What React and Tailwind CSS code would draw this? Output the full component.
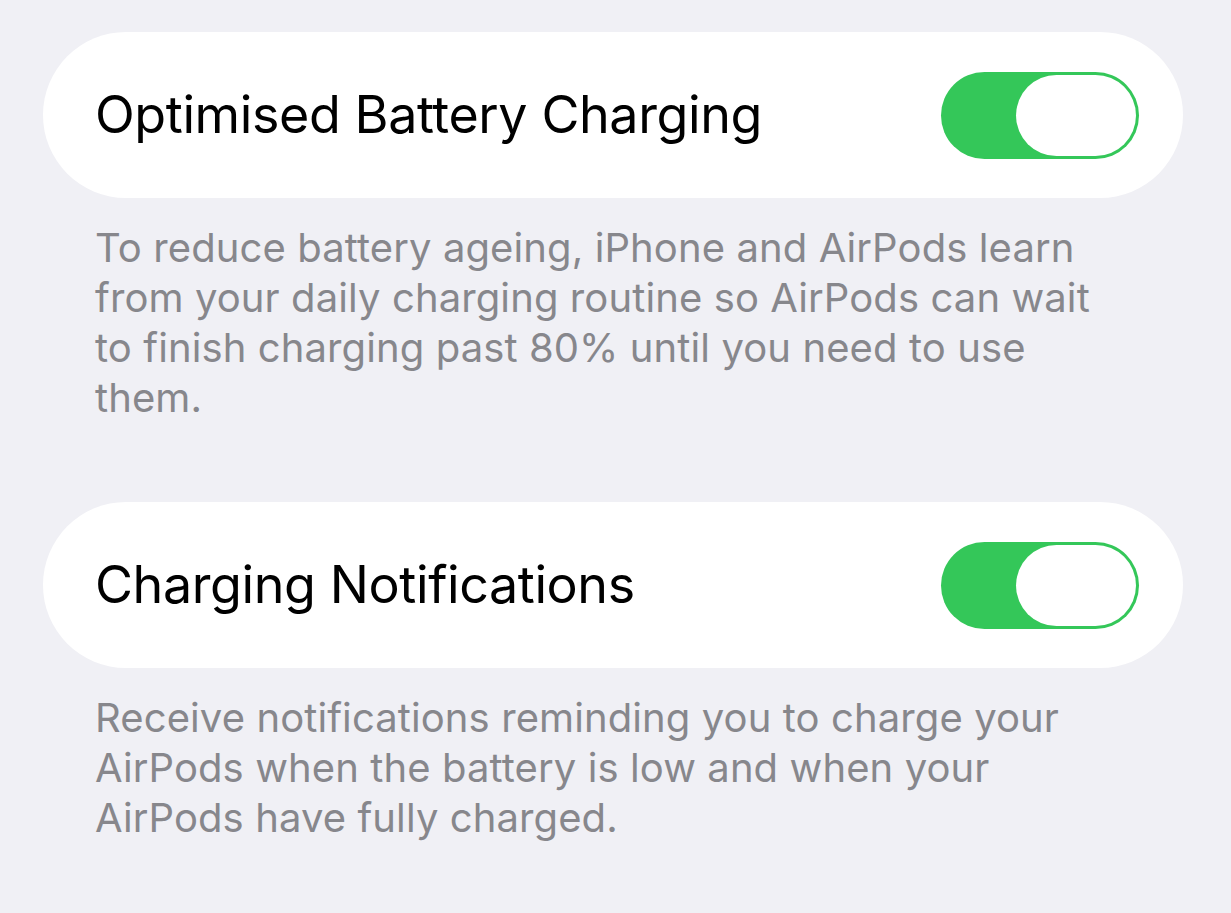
const SETTINGS = [
  {
    title: 'Optimised Battery Charging',
    footer: [
      'To reduce battery ageing, iPhone and AirPods learn',
      'from your daily charging routine so AirPods can wait',
      'to finish charging past 80% until you need to use',
      'them.',
    ],
  },
  {
    title: 'Charging Notifications',
    footer: [
      'Receive notifications reminding you to charge your',
      'AirPods when the battery is low and when your',
      'AirPods have fully charged.',
    ],
  },
]

function Toggle() {
  return (
    <div className="flex h-[87px] w-[198px] shrink-0 justify-end rounded-full bg-[#34c759] p-[3px]">
      <div className="h-full w-[120px] rounded-full bg-white" />
    </div>
  )
}

export default function App() {
  return (
    <div
      className="min-h-[913px] w-[1231px] bg-[#f0f0f5] pl-[43px] pt-[32px]"
      style={{ fontFamily: 'Inter, "Noto Sans", sans-serif' }}
    >
      {SETTINGS.map((s, i) => (
        <section key={s.title} className={i > 0 ? 'mt-[79px]' : ''}>
          <div className="flex h-[166px] w-[1140px] items-center justify-between rounded-full bg-white pl-[52px] pr-[44px]">
            <span className="text-[52px] leading-none tracking-[-0.4px] text-black">{s.title}</span>
            <Toggle />
          </div>
          <p className="mt-[25px] pl-[52px] text-[40px] leading-[50px] tracking-[0.1px] text-[#87878c]">
            {s.footer.map((line, j) => (
              <span key={j} className="block whitespace-nowrap">{line}</span>
            ))}
          </p>
        </section>
      ))}
    </div>
  )
}
